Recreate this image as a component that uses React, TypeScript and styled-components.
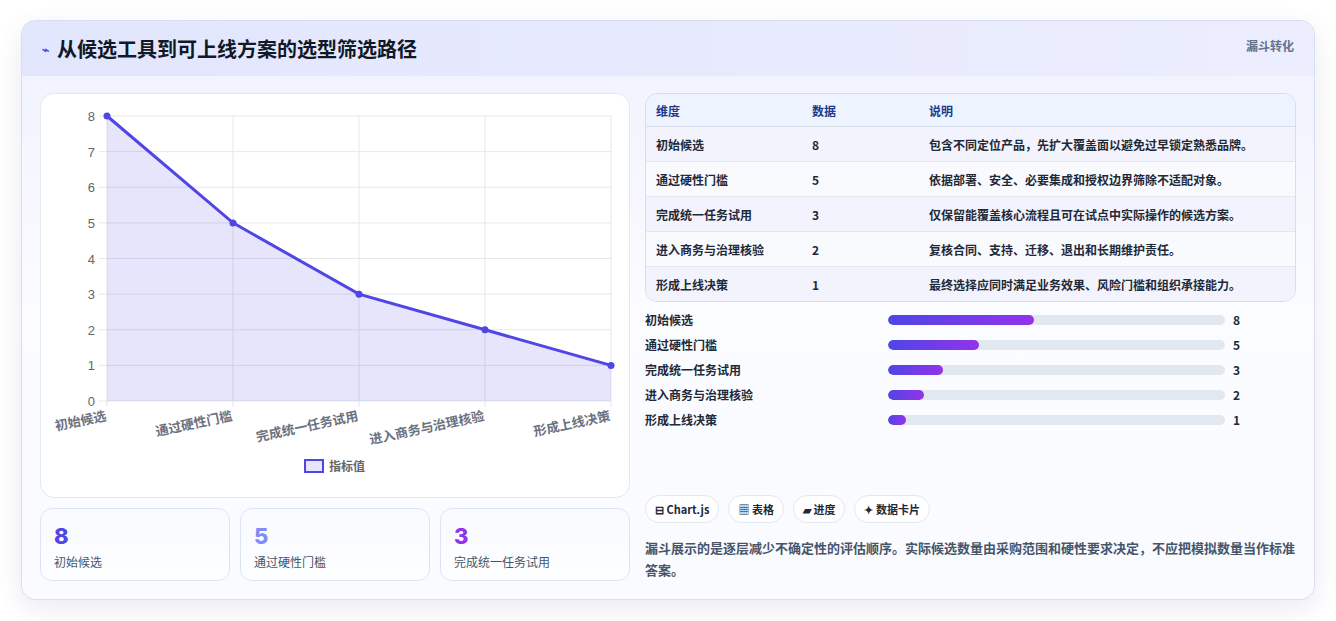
import React from 'react';
import styled, { createGlobalStyle } from 'styled-components';

const rows = [
	{ name: '初始候选', value: 8, note: '包含不同定位产品，先扩大覆盖面以避免过早锁定熟悉品牌。' },
	{ name: '通过硬性门槛', value: 5, note: '依据部署、安全、必要集成和授权边界筛除不适配对象。' },
	{ name: '完成统一任务试用', value: 3, note: '仅保留能覆盖核心流程且可在试点中实际操作的候选方案。' },
	{ name: '进入商务与治理核验', value: 2, note: '复核合同、支持、迁移、退出和长期维护责任。' },
	{ name: '形成上线决策', value: 1, note: '最终选择应同时满足业务效果、风险门槛和组织承接能力。' },
];

const GlobalStyle = createGlobalStyle`
	body {
		margin: 0;
		background: #f8f9fc;
		font-family: "Noto Sans CJK SC", "Noto Sans", sans-serif;
	}
`;

const Page = styled.div`
	padding: 20px 21px 21px;
	background: #fff;
`;

const Card = styled.section`
	border: 1px solid #d9dcf5;
	border-radius: 14px;
	overflow: hidden;
	background: linear-gradient(180deg, #eff1fe 0%, #fbfcff 50%, #fafbff 100%);
	box-shadow: 0 8px 24px rgba(80, 80, 160, 0.12);
`;

const Header = styled.header`
	display: flex;
	justify-content: space-between;
	align-items: flex-start;
	height: 55px;
	padding: 0 20px;
	background: linear-gradient(90deg, #e2e6fd, #eceefe);
`;

const Title = styled.h1`
	display: flex;
	align-items: center;
	gap: 8px;
	margin: 0;
	height: 55px;
	font-size: 20px;
	font-weight: 700;
	color: #111827;
`;

const Spark = styled.span`
	color: #4f46e5;
	font-size: 12px;
`;

const Tag = styled.span`
	margin-top: 16px;
	font-size: 12px;
	font-weight: 700;
	color: #64748b;
`;

const Body = styled.div`
	display: grid;
	grid-template-columns: 590px 1fr;
	gap: 15px;
	padding: 17px 18px 18px 18px;
`;

const Col = styled.div`
	display: flex;
	flex-direction: column;
	gap: 10px;
`;

const ChartCard = styled.div`
	height: 403px;
	background: #fff;
	border: 1px solid #e2e8f0;
	border-radius: 14px;
`;

const Stats = styled.div`
	display: grid;
	grid-template-columns: repeat(3, 1fr);
	gap: 10px;
`;

const Stat = styled.div`
	height: 73px;
	box-sizing: border-box;
	padding: 14px 13px;
	border: 1px solid #dbe4f5;
	border-radius: 12px;
	background: linear-gradient(180deg, #f8faff, #fdfeff);
`;

const StatValue = styled.div<{ $c: string }>`
	font-family: Inter, "Noto Sans", sans-serif;
	font-size: 22px;
	font-weight: 800;
	line-height: 26px;
	color: ${p => p.$c};
`;

const StatLabel = styled.div`
	margin-top: 4px;
	font-size: 12px;
	color: #475569;
`;

const Table = styled.table`
	width: 100%;
	border-collapse: separate;
	border-spacing: 0;
	border: 1px solid #d7deea;
	border-radius: 12px;
	overflow: hidden;
	font-size: 12px;
	color: #1f2937;
`;

const Th = styled.th`
	height: 32px;
	padding: 0 10px;
	text-align: left;
	font-weight: 700;
	color: #1e3a8a;
	background: #eef4ff;
	border-bottom: 1px solid #d7deea;
`;

const Tr = styled.tr<{ $alt: boolean }>`
	background: ${p => (p.$alt ? '#f9fafe' : '#f2f3fc')};
`;

const Td = styled.td<{ $last: boolean }>`
	height: 34px;
	padding: 0 10px;
	font-weight: 600;
	border-bottom: ${p => (p.$last ? 'none' : '1px solid #e2e8f0')};
`;

const Bars = styled.div`
	display: flex;
	flex-direction: column;
	gap: 9px;
	margin-top: -1px;
`;

const BarRow = styled.div`
	display: grid;
	grid-template-columns: 235px 337px 1fr;
	align-items: center;
	gap: 8px;
	font-size: 12px;
	font-weight: 600;
	color: #1f2937;
	height: 16px;
`;

const Track = styled.div`
	height: 10px;
	border-radius: 5px;
	background: #e2e8f0;
	overflow: hidden;
`;

const Fill = styled.div`
	height: 100%;
	border-radius: 5px;
	background: linear-gradient(90deg, #4f46e5, #9333ea);
`;

const Chips = styled.div`
	display: flex;
	gap: 9px;
	margin-top: auto;
`;

const Chip = styled.span`
	padding: 5px 9px;
	border: 1px solid #e2e8f0;
	border-radius: 14px;
	background: #fff;
	font-size: 11px;
	font-weight: 700;
	color: #1f2937;
`;

const Note = styled.p`
	margin: 4px 0 0;
	font-size: 13px;
	font-weight: 600;
	line-height: 22px;
	color: #475569;
`;

const px = [66, 192, 318, 444, 570];
const py = (v: number) => 307 - v * 35.625;

const Chart = () => {
	const line = rows.map((r, i) => `${i ? 'L' : 'M'}${px[i]},${py(r.value)}`).join(' ');
	return (
		<svg width="590" height="403" style={{ display: 'block' }}>
			{[0, 1, 2, 3, 4, 5, 6, 7, 8].map(v => (
				<g key={v}>
					<line x1={58} x2={570} y1={py(v)} y2={py(v)} stroke="#e5e7eb" />
					<text x={54} y={py(v) + 5} textAnchor="end" fontSize="13" fill="#666" fontFamily="Liberation Sans">
						{v}
					</text>
				</g>
			))}
			{px.map(x => (
				<line key={x} x1={x} x2={x} y1={22} y2={313} stroke="#e5e7eb" />
			))}
			<path d={`${line} L570,307 L66,307 Z`} fill="rgba(79,70,229,0.14)" />
			<path d={line} fill="none" stroke="#4f46e5" strokeWidth="3" />
			{rows.map((r, i) => (
				<circle key={i} cx={px[i]} cy={py(r.value)} r="3.5" fill="#4f46e5" />
			))}
			{rows.map((r, i) => (
				<text
					key={r.name}
					x={px[i]}
					y={326}
					textAnchor="end"
					transform={`rotate(-12 ${px[i]} 326)`}
					fontSize="13"
					fontWeight="700"
					fill="#6b7280"
				>
					{r.name}
				</text>
			))}
			<rect x={264} y={366} width={18} height={12} fill="rgba(79,70,229,0.14)" stroke="#4f46e5" strokeWidth="2" />
			<text x={288} y={377} fontSize="12" fontWeight="700" fill="#666">
				指标值
			</text>
		</svg>
	);
};

const App: React.FunctionComponent = () => {
	const colors = ['#4f46e5', '#818cf8', '#9333ea'];
	return (
		<Page>
			<GlobalStyle />
			<Card>
				<Header>
					<Title>
						<Spark>⌁</Spark>从候选工具到可上线方案的选型筛选路径
					</Title>
					<Tag>漏斗转化</Tag>
				</Header>
				<Body>
					<Col>
						<ChartCard>
							<Chart />
						</ChartCard>
						<Stats>
							{rows.slice(0, 3).map((r, i) => (
								<Stat key={r.name}>
									<StatValue $c={colors[i]}>{r.value}</StatValue>
									<StatLabel>{r.name}</StatLabel>
								</Stat>
							))}
						</Stats>
					</Col>
					<Col>
						<Table>
							<thead>
								<tr>
									<Th style={{ width: 136 }}>维度</Th>
									<Th style={{ width: 97 }}>数据</Th>
									<Th>说明</Th>
								</tr>
							</thead>
							<tbody>
								{rows.map((r, i) => (
									<Tr key={r.name} $alt={i % 2 === 1}>
										<Td $last={i === 4}>{r.name}</Td>
										<Td $last={i === 4}>{r.value}</Td>
										<Td $last={i === 4}>{r.note}</Td>
									</Tr>
								))}
							</tbody>
						</Table>
						<Bars>
							{rows.map(r => (
								<BarRow key={r.name}>
									<span>{r.name}</span>
									<Track>
										<Fill style={{ width: `${(r.value / 8) * 43.3}%` }} />
									</Track>
									<span>{r.value}</span>
								</BarRow>
							))}
						</Bars>
						<Chips>
							<Chip>⊟ Chart.js</Chip>
							<Chip>▦ 表格</Chip>
							<Chip>▰ 进度</Chip>
							<Chip>✦ 数据卡片</Chip>
						</Chips>
						<Note>
							漏斗展示的是逐层减少不确定性的评估顺序。实际候选数量由采购范围和硬性要求决定，不应把模拟数量当作标准答案。
						</Note>
					</Col>
				</Body>
			</Card>
		</Page>
	);
};

export default React.memo(App);
